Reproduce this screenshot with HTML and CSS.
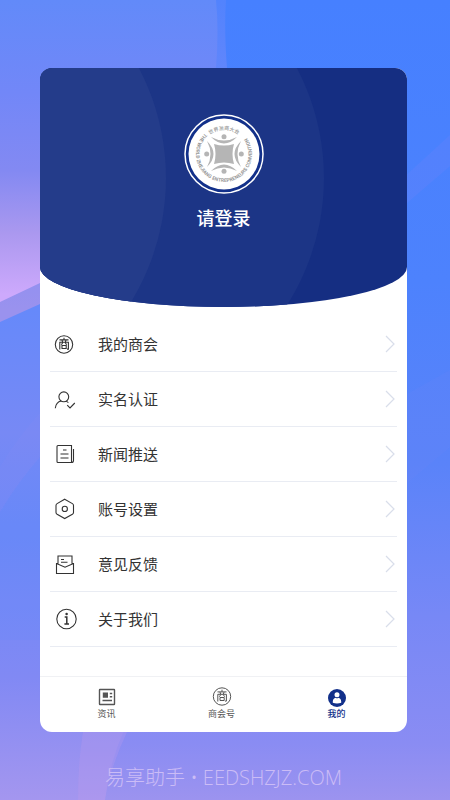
FILE: index.html
```
<!DOCTYPE html>
<html lang="zh-CN">
<head>
    <meta charset="UTF-8">
    <meta name="viewport" content="width=device-width, initial-scale=1.0">
    <title>我的</title>
    <link rel="stylesheet" href="styles.css">
</head>
<body>
    <svg class="backdrop" viewBox="0 0 450 800" preserveAspectRatio="none" aria-hidden="true">
        <defs>
            <linearGradient id="pink" gradientUnits="userSpaceOnUse" x1="0" y1="0" x2="0" y2="310">
                <stop offset="0" stop-color="#628af9"/>
                <stop offset="0.3" stop-color="#7287f8"/>
                <stop offset="0.55" stop-color="#8389f2"/>
                <stop offset="0.75" stop-color="#aa98ef"/>
                <stop offset="0.95" stop-color="#cda9fc"/>
            </linearGradient>
            <linearGradient id="edge" gradientUnits="userSpaceOnUse" x1="0" y1="0" x2="0" y2="310">
                <stop offset="0" stop-color="#5283fd"/>
                <stop offset="0.25" stop-color="#6286fb"/>
                <stop offset="1" stop-color="#9a92ee"/>
            </linearGradient>
            <linearGradient id="blue" gradientUnits="userSpaceOnUse" x1="0" y1="310" x2="0" y2="800">
                <stop offset="0" stop-color="#6689fa"/>
                <stop offset="0.25" stop-color="#7789f5"/>
                <stop offset="0.45" stop-color="#6c88f8"/>
                <stop offset="0.75" stop-color="#8189f4"/>
                <stop offset="1" stop-color="#a496ef"/>
            </linearGradient>
        </defs>
        <path d="M0 290H200V700H140Q110 750 105 800H0z" fill="url(#blue)"/>
        <path d="M0 512Q18 482 40 457V640H0z" fill="#4f86ff" opacity="0.1"/>
        <path d="M0 467Q18 437 40 413V457Q18 482 0 512z" fill="#8a8cf2" opacity="0.15"/>
        <path d="M83 732H127Q110 768 105 800H78Q78 762 83 732z" fill="#c29aec" opacity="0.25"/>
        <path d="M0 0H226Q224 30 227 68V220L40 304L0 322z" fill="url(#edge)"/>
        <path d="M0 0H216Q219 30 216 68V210L40 283L0 302z" fill="url(#pink)"/>
        <path d="M450 135L400 181V209L450 166z" fill="#7d86f8" opacity="0.18"/>
        <path d="M450 370L400 398V489L450 447z" fill="#7d86f8" opacity="0.1"/>
    </svg>

    <div class="page">
        <main class="card">
            <header class="profile">
                <svg class="profile-bg" viewBox="0 0 367 239" preserveAspectRatio="none" aria-hidden="true">
                    <circle cx="47" cy="110" r="237" fill="#1c3586"/>
                    <circle cx="-111" cy="110" r="237" fill="#243c8a"/>
                </svg>
                <svg class="logo" viewBox="-40 -40 80 80" role="img" aria-label="世界浙商大会">
                    <defs>
                        <path id="ringTop" d="M-24 0A24 24 0 0 1 24 0"/>
                        <path id="ringRound" d="M-19 -20.6A28 28 0 1 0 21 -18.5"/>
                        <path id="crescent" d="M-13 -17Q0 -4 13 -17Q0 -10 -13 -17z"/>
                    </defs>
                    <circle r="39" fill="#12308a" stroke="#fff" stroke-width="1.5"/>
                    <circle r="35.5" fill="#fff"/>
                    <text class="ring-cn"><textPath href="#ringTop" startOffset="50%" text-anchor="middle">世界浙商大会</textPath></text>
                    <text class="ring-en"><textPath href="#ringRound">THE WORLD ZHEJIANG ENTREPRENEURS CONVENTION</textPath></text>
                    <g fill="#b5b5b5">
                        <path d="M-10 -10Q0 -7 10 -10Q7 0 10 10Q0 7 -10 10Q-7 0 -10 -10z"/>
                        <use href="#crescent"/>
                        <use href="#crescent" transform="rotate(90)"/>
                        <use href="#crescent" transform="rotate(180)"/>
                        <use href="#crescent" transform="rotate(270)"/>
                        <circle cy="-17.3" r="2.5"/>
                        <circle cy="17.3" r="2.5"/>
                        <circle cx="-17.3" r="2.5"/>
                        <circle cx="17.3" r="2.5"/>
                    </g>
                </svg>
                <a class="login" href="#login">请登录</a>
            </header>

            <ul class="menu">
                <li>
                    <a href="#chamber">
                        <svg class="icon" viewBox="0 0 24 24">
                            <g id="shang" transform="translate(-1 0.5)">
                                <circle cx="12" cy="12" r="8.7"/>
                                <path d="M12 5.2V7.4M7.5 7.4H16.5M10 7.6L10.6 9.6M14 7.6L13.4 9.6M7.8 17V9.8H16.4V16.6H15M10.8 10L9.4 12.2M13.2 10L14.6 12.2M10 13H14.2V16H10z"/>
                            </g>
                        </svg>
                        <span>我的商会</span>
                        <svg class="arrow" viewBox="0 0 10 18"><path d="M1 1L9 9L1 17"/></svg>
                    </a>
                </li>
                <li>
                    <a href="#verify">
                        <svg class="icon" viewBox="0 0 24 24">
                            <circle cx="10.8" cy="9.8" r="4.9"/>
                            <path d="M2.3 21.2C2.8 17 5 14.6 8.2 14M13.2 14.1L15.4 15.6M14.2 18.2L17 21L21.8 16"/>
                        </svg>
                        <span>实名认证</span>
                        <svg class="arrow" viewBox="0 0 10 18"><path d="M1 1L9 9L1 17"/></svg>
                    </a>
                </li>
                <li>
                    <a href="#news">
                        <svg class="icon" viewBox="0 0 24 24">
                            <path d="M5 3.5H18.5V20.5H5Q4 20.5 4 19.5V4.5Q4 3.5 5 3.5zM18.5 20.5Q20.5 20.5 20.5 18.5V7M10 8H13.5M7.5 12H15.5M7.5 16H15.5"/>
                        </svg>
                        <span>新闻推送</span>
                        <svg class="arrow" viewBox="0 0 10 18"><path d="M1 1L9 9L1 17"/></svg>
                    </a>
                </li>
                <li>
                    <a href="#settings">
                        <svg class="icon" viewBox="0 0 24 24">
                            <path d="M11.7 2.2L19.4 6.6Q20.5 7.3 20.5 8.4V15.4Q20.5 16.5 19.4 17.2L11.7 21.6L4.1 17.2Q3 16.5 3 15.4V8.4Q3 7.3 4.1 6.6z"/>
                            <circle cx="11.8" cy="11.9" r="2.6"/>
                        </svg>
                        <span>账号设置</span>
                        <svg class="arrow" viewBox="0 0 10 18"><path d="M1 1L9 9L1 17"/></svg>
                    </a>
                </li>
                <li>
                    <a href="#feedback">
                        <svg class="icon" viewBox="0 0 24 24">
                            <path d="M5 11.5H3.5V21.5H20.5V11.5H19M3.5 11.5L12 15.2L20.5 11.5M5 12V4H19V12M8 7.5H11M8 10.2H14.5"/>
                        </svg>
                        <span>意见反馈</span>
                        <svg class="arrow" viewBox="0 0 10 18"><path d="M1 1L9 9L1 17"/></svg>
                    </a>
                </li>
                <li>
                    <a href="#about">
                        <svg class="icon" viewBox="0 0 24 24">
                            <circle cx="13.5" cy="12" r="9.7"/>
                            <path d="M11.7 10H13.8V16.8M11.4 16.9H16" stroke-width="1.5"/>
                            <circle cx="13.6" cy="7" r="0.7" fill="#333"/>
                        </svg>
                        <span>关于我们</span>
                        <svg class="arrow" viewBox="0 0 10 18"><path d="M1 1L9 9L1 17"/></svg>
                    </a>
                </li>
            </ul>

            <nav class="tabs">
                <a href="#info">
                    <svg class="tab-icon" viewBox="0 0 20 20">
                        <path d="M3.5 2.5H17Q17.5 2.5 17.5 3V17Q17.5 17.5 17 17.5H3Q2.5 17.5 2.5 17V3Q2.5 2.5 3 2.5zM12.8 6.5H15.2M12.8 9.8H15.2M5.5 13.5H15" stroke-width="1.4"/>
                        <path d="M5.8 5.5H11V10.8H5.8z" fill="#555" stroke="none"/>
                    </svg>
                    <span>资讯</span>
                </a>
                <a href="#shanghui">
                    <svg class="tab-icon" viewBox="0 0 20 20"><use href="#shang" x="-1" y="-3"/></svg>
                    <span>商会号</span>
                </a>
                <a class="active" href="#mine" aria-current="page">
                    <svg class="tab-icon" viewBox="0 0 20 20">
                        <circle cx="10" cy="11" r="9" fill="#12308a" stroke="none"/>
                        <path d="M10 5.2A2.5 2.5 0 1 1 10 10.2A2.5 2.5 0 1 1 10 5.2zM5.8 15.8V14.5Q6 11.3 8.6 10.8Q10 11.8 11.4 10.8Q14 11.3 14.2 14.5V15.8Q10 17.4 5.8 15.8z" fill="#fff" stroke="none"/>
                    </svg>
                    <span>我的</span>
                </a>
            </nav>
        </main>

        <footer class="site">易享助手 • EEDSHZJZ.COM</footer>
    </div>
</body>
</html>
```
FILE: styles.css
```
body {
    margin: 0;
    min-height: 100vh;
    font-family: "Noto Sans CJK SC", sans-serif;
    background: linear-gradient(#4680ff 0%, #4d82fd 35%, #5a83f9 58%, #7788f6 77%, #8a8cf3 93%, #9c93ef 100%);
}
a {
    color: inherit;
    text-decoration: none;
}
.backdrop {
    position: absolute;
    top: 0;
    left: 0;
    width: 100%;
    height: 100%;
}
.page {
    position: relative;
    padding: 68px 43px 0 40px;
}
.card {
    background-color: #fff;
    border-radius: 12px;
    overflow: hidden;
}

/* blue header */
.profile {
    position: relative;
    display: flex;
    flex-direction: column;
    align-items: center;
    gap: 9px;
    padding: 46px 0 76px;
    background-color: #152e82;
    border-radius: 0 0 50% 50% / 0 0 40px 40px;
    overflow: hidden;
}
.profile-bg {
    position: absolute;
    top: 0;
    left: 0;
    width: 100%;
    height: 100%;
}
.logo {
    position: relative;
    width: 80px;
    height: 80px;
}
.ring-cn {
    font-size: 5px;
    font-weight: 500;
    fill: #999;
}
.ring-en {
    font-family: Roboto, sans-serif;
    font-size: 5px;
    font-weight: 700;
    fill: #999;
}
.login {
    position: relative;
    color: #fff;
    font-size: 18px;
    font-weight: 500;
    line-height: 28px;
}

/* menu list */
.menu {
    list-style: none;
    margin: 0;
    padding: 10px 10px 29px;
}
.menu a {
    display: flex;
    align-items: center;
    height: 54px;
    padding: 0 2px 0 3px;
    border-bottom: 1px solid #e9ecf3;
    color: #333;
    font-size: 15px;
}
.menu span {
    flex: 1;
    margin-left: 21px;
    padding-bottom: 2px;
}
.icon {
    width: 24px;
    height: 24px;
    fill: none;
    stroke: #333;
    stroke-width: 1.1;
}
.arrow {
    width: 10px;
    height: 18px;
    fill: none;
    stroke: #d9deea;
    stroke-width: 1.2;
}

/* bottom tabs */
.tabs {
    display: flex;
    padding: 10px 13px 11px 9px;
    border-top: 1px solid #f0f1f4;
}
.tabs a {
    flex: 1;
    display: flex;
    flex-direction: column;
    align-items: center;
    color: #555;
    font-size: 9px;
    line-height: 14px;
}
.tabs .active {
    color: #12308a;
    font-weight: 500;
}
.tab-icon {
    width: 20px;
    height: 20px;
    fill: none;
    stroke: #555;
}

.site {
    padding: 30px 0 6px;
    text-align: center;
    color: #cbbcf6;
    font-family: "Open Sans", "Noto Sans CJK SC", sans-serif;
    font-size: 20px;
    font-weight: 300;
    line-height: 32px;
}
```
